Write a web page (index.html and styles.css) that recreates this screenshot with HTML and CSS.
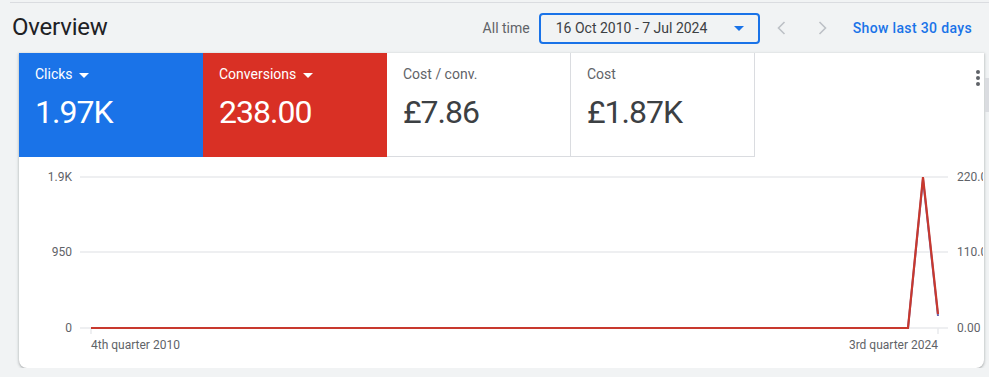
FILE: index.html
```html
<!DOCTYPE html>
<html lang="en">
<head>
	<meta charset="UTF-8">
	<title>Overview</title>
	<link rel="stylesheet" href="styles.css">
</head>
<body>
	<div class="header">
		<h1 class="title">Overview</h1>
		<div class="controls">
			<span class="range-label">All time</span>
			<div class="date-picker">
				<span>16 Oct 2010 - 7 Jul 2024</span>
				<span class="caret blue"></span>
			</div>
			<svg class="chev" width="16" height="16" viewBox="0 0 16 16"><path d="M10.5 2 L4.5 8 L10.5 14" fill="none" stroke="#bdc1c6" stroke-width="1.6"/></svg>
			<svg class="chev" width="16" height="16" viewBox="0 0 16 16"><path d="M5.5 2 L11.5 8 L5.5 14" fill="none" stroke="#bdc1c6" stroke-width="1.6"/></svg>
			<a class="link">Show last 30 days</a>
		</div>
	</div>

	<div class="card">
		<div class="tiles">
			<div class="tile clicks">
				<div class="label">Clicks <span class="caret"></span></div>
				<div class="value">1.97K</div>
			</div>
			<div class="tile conv">
				<div class="label">Conversions <span class="caret"></span></div>
				<div class="value">238.00</div>
			</div>
			<div class="tile plain">
				<div class="label">Cost / conv.</div>
				<div class="value">£7.86</div>
			</div>
			<div class="tile plain">
				<div class="label">Cost</div>
				<div class="value">£1.87K</div>
			</div>
			<div class="tile-rest">
				<svg class="more" width="6" height="18" viewBox="0 0 6 18"><circle cx="3" cy="3" r="2"/><circle cx="3" cy="9" r="2"/><circle cx="3" cy="15" r="2"/></svg>
			</div>
		</div>

		<svg class="chart" width="964" height="211" viewBox="0 0 964 211">
			<g stroke="#e8eaed" stroke-width="1.5">
				<line x1="61" y1="20" x2="929" y2="20"/>
				<line x1="61" y1="95" x2="929" y2="95"/>
				<line x1="61" y1="171" x2="929" y2="171"/>
				<line x1="72" y1="171" x2="72" y2="177"/>
				<line x1="919" y1="171" x2="919" y2="177"/>
			</g>
			<g class="axis" text-anchor="end">
				<text x="53" y="24">1.9K</text>
				<text x="53" y="99">950</text>
				<text x="53" y="175">0</text>
			</g>
			<g class="axis">
				<text x="938" y="24">220.00</text>
				<text x="938" y="99">110.00</text>
				<text x="938" y="175">0.00</text>
				<text x="72" y="192">4th quarter 2010</text>
				<text x="919" y="192" text-anchor="end">3rd quarter 2024</text>
			</g>
			<polyline points="72,171 889,171 904,22 919,159" fill="none" stroke="#6a64b0" stroke-width="2"/>
			<polyline points="72,171 889,171 904,20 919,157" fill="none" stroke="#c8392e" stroke-width="2.2"/>
		</svg>
		<div class="scroll-thumb"></div>
	</div>
</body>
</html>
```

FILE: styles.css
```css
body {
	margin: 0;
	background: #f1f3f4;
	font-family: Roboto, "Noto Sans", Arial, sans-serif;
	color: #3c4043;
	overflow: hidden;
}

.header {
	display: flex;
	align-items: center;
	justify-content: space-between;
	margin: 2px 0 0 10px;
	border-top: 1px solid #dadce0;
	height: 50px;
	padding: 0 17px 0 2px;
}

.title {
	margin: 0;
	font-size: 24px;
	font-weight: 400;
	color: #202124;
	letter-spacing: -0.2px;
	position: relative;
	top: -1px;
}

.controls {
	display: flex;
	align-items: center;
}

.range-label {
	font-size: 14px;
	color: #5f6368;
	margin-right: 9px;
}

.date-picker {
	display: flex;
	align-items: center;
	justify-content: space-between;
	box-sizing: border-box;
	width: 221px;
	height: 31px;
	border: 2px solid #1a73e8;
	border-radius: 4px;
	padding: 0 14px 0 15px;
	font-size: 14px;
	color: #3c4043;
	margin-right: 14px;
}

.caret {
	display: inline-block;
	width: 0;
	height: 0;
	border-left: 5px solid transparent;
	border-right: 5px solid transparent;
	border-top: 5px solid #fff;
	vertical-align: middle;
	margin-left: 3px;
}

.caret.blue {
	border-top-color: #1a73e8;
}

.chev {
	margin-right: 24px;
}

.chev + .chev {
	margin-right: 23px;
}

.link {
	font-size: 14px;
	font-weight: 500;
	color: #1a73e8;
	letter-spacing: 0.35px;
}

.card {
	position: relative;
	margin-left: 19px;
	width: 965px;
	height: 315px;
	background: #fff;
	border-radius: 0 0 8px 8px;
	box-shadow: 0 1px 2px rgba(60, 64, 67, .3), 0 1px 3px 1px rgba(60, 64, 67, .12);
}

.tiles {
	display: flex;
	height: 104px;
}

.tile {
	box-sizing: border-box;
	width: 184px;
	padding: 13px 16px 0;
}

.tile.clicks {
	background: #1a73e8;
	color: #fff;
}

.tile.conv {
	background: #d93025;
	color: #fff;
}

.tile.plain {
	border-right: 1px solid #dadce0;
	border-bottom: 1px solid #dadce0;
	color: #3c4043;
	width: 184px;
}

.label {
	font-size: 14px;
	line-height: 16px;
}

.plain .label {
	color: #5f6368;
}

.value {
	font-size: 32px;
	line-height: 38px;
	margin-top: 11px;
	letter-spacing: -1px;
}

.plain .value {
	color: #3c4043;
}

.tile-rest {
	flex: 1;
	display: flex;
	justify-content: flex-end;
	padding: 16px 3px 0 0;
}

.more {
	fill: #5f6368;
}

.chart {
	display: block;
}

.axis text {
	font-size: 12px;
	fill: #5f6368;
}

.scroll-thumb {
	position: absolute;
	right: -6px;
	top: 25px;
	width: 5px;
	height: 34px;
	background: #dadce0;
}
```
